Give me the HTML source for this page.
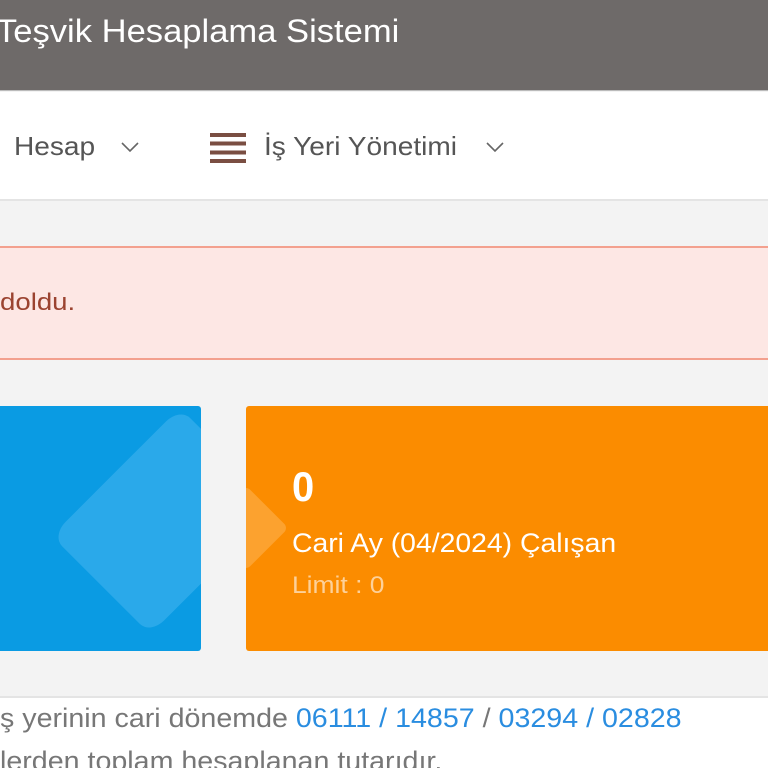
<!DOCTYPE html>
<html><head><meta charset="utf-8"><style>
*{margin:0;padding:0;box-sizing:border-box}
html,body{width:768px;height:768px;overflow:hidden}
body{background:#f3f3f3;font-family:"Liberation Sans",sans-serif;position:relative}
.abs{position:absolute;white-space:nowrap}
</style></head><body>
<div class="abs" style="left:0;top:0;width:768px;height:91px;background:#6e6a69;border-bottom:1px solid #bbb"></div>
<div class="abs" style="left:-4px;top:13px;font-size:32px;color:#fff;transform:scaleX(1.08);transform-origin:left">Teşvik Hesaplama Sistemi</div>
<div class="abs" style="left:0;top:92px;width:768px;height:109px;background:#fff;border-bottom:2px solid #e4e4e4"></div>
<div class="abs" style="left:14px;top:131px;font-size:26px;color:#555;transform:scaleX(1.08);transform-origin:left">Hesap</div>
<svg class="abs" style="left:120px;top:140px" width="20" height="14"><path d="M2 3 L10 11 L18 3" fill="none" stroke="#666" stroke-width="1.6"/></svg>
<div class="abs" style="left:210px;top:133px;width:36px;height:30px;background:repeating-linear-gradient(#7a4e42 0 4px,transparent 4px 8.7px)"></div>
<div class="abs" style="left:264px;top:131px;font-size:26px;color:#555;transform:scaleX(1.08);transform-origin:left">İş Yeri Yönetimi</div>
<svg class="abs" style="left:485px;top:140px" width="20" height="14"><path d="M2 3 L10 11 L18 3" fill="none" stroke="#666" stroke-width="1.6"/></svg>
<div class="abs" style="left:0;top:246px;width:768px;height:114px;background:#fde7e4;border-top:2px solid #f3a08e;border-bottom:2px solid #f3a08e"></div>
<div class="abs" style="left:0;top:289px;font-size:24px;color:#9b4330;transform:scaleX(1.15);transform-origin:left">doldu.</div>
<div class="abs" style="left:-10px;top:406px;width:211px;height:245px;background:#0a9be3;border-radius:3px;overflow:hidden">
 <div style="position:absolute;left:90px;top:30px;width:170px;height:170px;background:#2aa9ea;border-radius:18px;transform:rotate(45deg) scaleY(1.3) scale(.82)"></div>
</div>
<div class="abs" style="left:246px;top:406px;width:540px;height:245px;background:#fb8c00;border-radius:3px;overflow:hidden">
 <div style="position:absolute;left:-30px;top:92px;width:60px;height:60px;background:#fca22f;transform:rotate(45deg);border-radius:6px"></div>
</div>
<div class="abs" style="left:292px;top:463px;font-size:42px;color:#fff;font-weight:bold;transform:scaleX(.95);transform-origin:left">0</div>
<div class="abs" style="left:292px;top:528px;font-size:27px;color:#fff;transform:scaleX(1.05);transform-origin:left">Cari Ay (04/2024) Çalışan</div>
<div class="abs" style="left:292px;top:572px;font-size:24px;color:#fdd19a;transform:scaleX(1.1);transform-origin:left">Limit : 0</div>
<div class="abs" style="left:0;top:696px;width:768px;height:72px;background:#fff;border-top:2px solid #e4e4e4"></div>
<div class="abs" style="left:0;top:703px;font-size:27px;color:#777;transform:scaleX(1.06);transform-origin:left">ş yerinin cari dönemde <span style="color:#2a8de0">06111 / 14857</span> / <span style="color:#2a8de0">03294 / 02828</span></div>
<div class="abs" style="left:0;top:746px;font-size:27px;color:#777;transform:scaleX(1.06);transform-origin:left">lerden toplam hesaplanan tutarıdır.</div>
</body></html>
